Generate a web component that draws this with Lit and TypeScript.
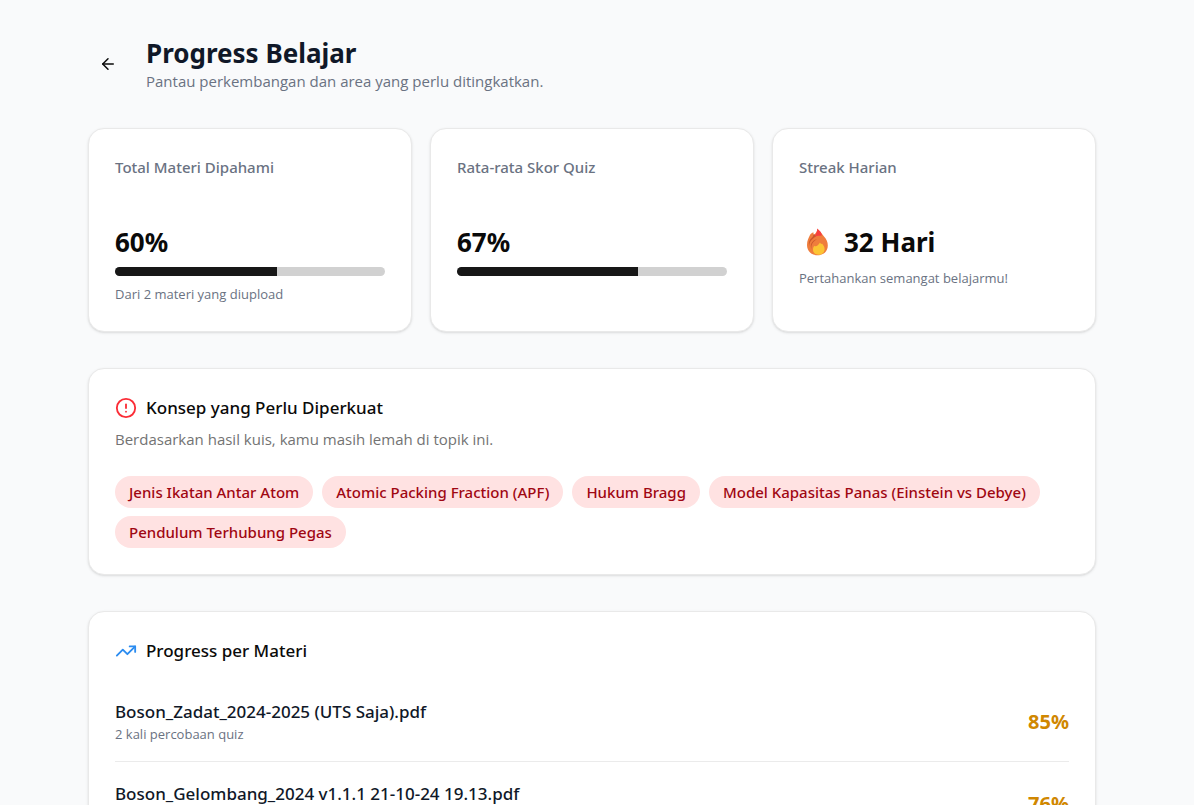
import { LitElement, html, css, svg, nothing } from "lit";
import { customElement, property } from "lit/decorators.js";

interface Material {
  name: string;
  attempts: number;
  score: number;
}

const TOPICS: string[] = [
  "Jenis Ikatan Antar Atom",
  "Atomic Packing Fraction (APF)",
  "Hukum Bragg",
  "Model Kapasitas Panas (Einstein vs Debye)",
  "Pendulum Terhubung Pegas",
];

const MATERIALS: Material[] = [
  { name: "Boson_Zadat_2024-2025 (UTS Saja).pdf", attempts: 2, score: 85 },
  { name: "Boson_Gelombang_2024 v1.1.1 21-10-24 19.13.pdf", attempts: 2, score: 76 },
];

const arrowLeft = svg`<path d="m12 19-7-7 7-7"/><path d="M19 12H5"/>`;
const circleAlert = svg`<circle cx="12" cy="12" r="10"/><line x1="12" x2="12" y1="8" y2="12"/><line x1="12" x2="12.01" y1="16" y2="16"/>`;
const trendingUp = svg`<path d="M16 7h6v6"/><path d="m22 7-8.5 8.5-5-5L2 17"/>`;

const icon = (shape: unknown, cls: string) => html`<svg
  class=${cls}
  viewBox="0 0 24 24"
  fill="none"
  stroke="currentColor"
  stroke-width="2"
  stroke-linecap="round"
  stroke-linejoin="round"
  aria-hidden="true"
>${shape}</svg>`;

const flame = html`<svg class="flame" viewBox="0 0 36 28" aria-hidden="true">
  <path fill="#ef7d3c" d="M18.300 .8C19.500 3 22.500 5 25 8.500c2.500 2.700 3.800 5.800 3.800 9 0 6-4.500 9.800-10.300 9.800S8 23.300 8 17c0-4.500 1.500-6.500 2.500-9 .8-2 2.500-3.500 4-3.700-.3 1 0 2 .3 2.700C16.800 5.500 18.200 3.500 18.300.8z"/>
  <path fill="#f8403f" d="M18.300.6c2 2 4.200 3.400 4.700 6.600-2 .8-3.600.2-5 .9-1.300.6-2.200 1-3 .8 2-2.300 3.200-4.800 3.300-8.300z"/>
  <path fill="#c9562c" d="M16.800 8.500c-3 2.200-6.500 4.500-6.600 9.500-1-3.500.3-6.500 2.800-8.500 1.200-1 1.600-2.700 1.700-4 .8 1.200 1.800 1.800 2.100 3z"/>
  <path fill="#c9562c" d="M18 11c-3.600 2.500-6.500 5.500-5.400 10.300-2.300-4.500.6-8.800 5.400-10.300z"/>
  <path fill="#fcc434" d="M21 14.500c.6 1.300 1.400 1.700 2.200 1.300 1.600 2 2.600 3.700 2.400 5.700-.3 3.400-3 5.300-6 5.300-3.400 0-5.600-2-5.600-5.200 0-1.500.4-2.700 1.300-3.900.6.500 1 .7 1.600.5 2-.5 2.900-2 4.100-3.700z"/>
</svg>`;

const shared = css`
  *,
  *::before,
  *::after {
    box-sizing: border-box;
  }
  h1,
  h2,
  h3,
  p,
  ul {
    margin: 0;
    padding: 0;
  }
  ul {
    list-style: none;
  }
  .card {
    background: #fff;
    border: 1px solid #e9e9e9;
    border-radius: 16px;
    padding: 26px;
    box-shadow: 0 1px 3px rgb(0 0 0 / 0.1), 0 1px 2px -1px rgb(0 0 0 / 0.1);
  }
`;

@customElement("stat-card")
export class StatCard extends LitElement {
  @property() label = "";
  @property() value = "";
  @property() note = "";
  @property({ type: Number }) percent = -1;
  @property({ type: Boolean }) streak = false;

  static styles = [
    shared,
    css`
      :host {
        display: grid;
      }
      .stat {
        min-height: 204px;
      }
      .label {
        font-size: 15px;
        font-weight: 500;
        line-height: 24px;
        color: #6a7282;
      }
      .value {
        display: flex;
        align-items: center;
        gap: 9px;
        margin-top: 45px;
        font-size: 26px;
        font-weight: 700;
        line-height: 36px;
        color: #0a0a0a;
      }
      .track {
        margin-top: 7px;
        height: 9px;
        border-radius: 9px;
        overflow: hidden;
        background: #d1d1d1;
      }
      .fill {
        height: 100%;
        background: #171717;
      }
      .note {
        margin-top: 9px;
        font-family: "Segoe UI", "Open Sans", "Noto Sans", sans-serif;
        font-size: 13px;
        line-height: 18px;
        color: #6a7282;
      }
      .flame {
        width: 36px;
        height: 28px;
      }
    `,
  ];

  render() {
    return html`<section class="card stat">
      <h2 class="label">${this.label}</h2>
      <p class="value">${this.streak ? flame : nothing}<span>${this.value}</span></p>
      ${this.percent >= 0
        ? html`<div
            class="track"
            role="progressbar"
            aria-label=${this.label}
            aria-valuemin="0"
            aria-valuemax="100"
            aria-valuenow=${this.percent}
          >
            <div class="fill" style="width:${this.percent}%"></div>
          </div>`
        : nothing}
      ${this.note ? html`<p class="note">${this.note}</p>` : nothing}
    </section>`;
  }
}

@customElement("app-root")
export class AppRoot extends LitElement {
  static styles = [
    shared,
    css`
      :host {
        display: block;
        height: 100vh;
        overflow: hidden;
        background: #f9fafb;
        color: #0a0a0a;
        font-family: "Segoe UI", "Noto Sans", "Open Sans", sans-serif;
      }
      .page {
        display: flex;
        flex-direction: column;
        gap: 36px;
        padding: 36px 98px 36px 88px;
      }
      .header {
        display: flex;
        align-items: center;
        gap: 18px;
      }
      .back {
        display: grid;
        place-items: center;
        width: 40px;
        height: 40px;
        padding: 0;
        border: 0;
        border-radius: 8px;
        background: none;
        color: #0a0a0a;
        cursor: pointer;
      }
      .back-icon {
        width: 18px;
        height: 18px;
      }
      .title {
        font-size: 26px;
        font-weight: 700;
        line-height: 34px;
        color: #101828;
      }
      .subtitle,
      .description,
      .attempts {
        font-family: "Segoe UI", "Open Sans", "Noto Sans", sans-serif;
      }
      .subtitle {
        font-size: 15px;
        line-height: 22px;
        color: #6a7282;
      }
      .stats {
        display: grid;
        grid-template-columns: repeat(3, 1fr);
        gap: 18px;
      }
      .heading {
        display: flex;
        align-items: center;
        gap: 9px;
        font-size: 17px;
        font-weight: 500;
        line-height: 26px;
      }
      .icon {
        width: 22px;
        height: 22px;
      }
      .alert {
        color: #fb2c36;
      }
      .trend {
        color: #2b8cf0;
      }
      .description {
        margin-top: 7px;
        font-size: 15px;
        line-height: 22px;
        color: #737373;
      }
      .topics {
        display: flex;
        flex-wrap: wrap;
        gap: 8px 9px;
        margin-top: 26px;
      }
      .topic {
        padding: 5px 14px 4px;
        border-radius: 16px;
        background: #ffe2e2;
        color: #9f0712;
        font-size: 15px;
        font-weight: 500;
        line-height: 23px;
      }
      .materials {
        margin-top: 16px;
      }
      .material {
        display: flex;
        align-items: center;
        justify-content: space-between;
        gap: 18px;
        padding: 19px 0 17px;
        border-bottom: 1px solid #ebebeb;
      }
      .material:last-child {
        border-bottom: 0;
      }
      .name {
        font-size: 17px;
        font-weight: 500;
        line-height: 26px;
        color: #101828;
      }
      .attempts {
        font-size: 13px;
        line-height: 19px;
        color: #6a7282;
      }
      .score {
        font-size: 20px;
        font-weight: 700;
        line-height: 28px;
        color: #d08700;
      }
    `,
  ];

  render() {
    return html`<main class="page">
      <header class="header">
        <button class="back" type="button" aria-label="Kembali">${icon(arrowLeft, "back-icon")}</button>
        <div>
          <h1 class="title">Progress Belajar</h1>
          <p class="subtitle">Pantau perkembangan dan area yang perlu ditingkatkan.</p>
        </div>
      </header>

      <div class="stats">
        <stat-card label="Total Materi Dipahami" value="60%" percent="60" note="Dari 2 materi yang diupload"></stat-card>
        <stat-card label="Rata-rata Skor Quiz" value="67%" percent="67"></stat-card>
        <stat-card label="Streak Harian" value="32 Hari" note="Pertahankan semangat belajarmu!" streak></stat-card>
      </div>

      <section class="card">
        <h2 class="heading">${icon(circleAlert, "icon alert")}Konsep yang Perlu Diperkuat</h2>
        <p class="description">Berdasarkan hasil kuis, kamu masih lemah di topik ini.</p>
        <ul class="topics">
          ${TOPICS.map((topic) => html`<li class="topic">${topic}</li>`)}
        </ul>
      </section>

      <section class="card">
        <h2 class="heading">${icon(trendingUp, "icon trend")}Progress per Materi</h2>
        <ul class="materials">
          ${MATERIALS.map(
            (item) => html`<li class="material">
              <div>
                <h3 class="name">${item.name}</h3>
                <p class="attempts">${item.attempts} kali percobaan quiz</p>
              </div>
              <span class="score">${item.score}%</span>
            </li>`
          )}
        </ul>
      </section>
    </main>`;
  }
}
